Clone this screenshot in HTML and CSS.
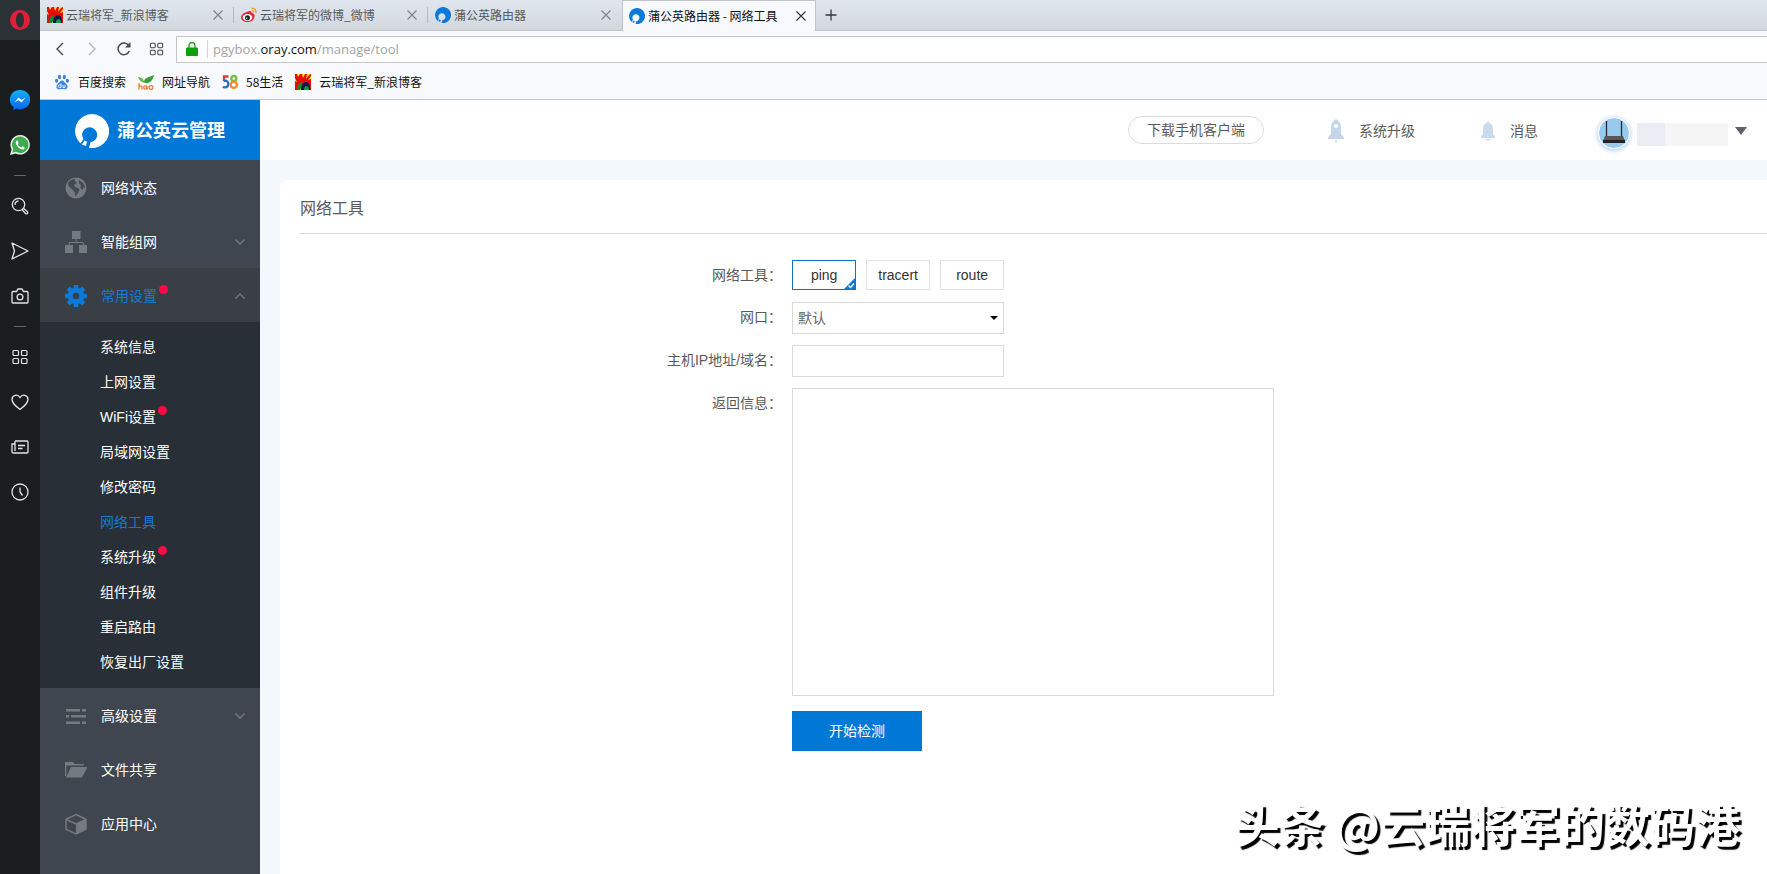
FILE: index.html
```html
<!DOCTYPE html>
<html lang="zh-CN">
<head>
<meta charset="utf-8">
<meta name="viewport" content="width=device-width, initial-scale=1">
<title>蒲公英路由器 - 网络工具</title>
<link rel="stylesheet" href="styles.css">
</head>
<body>
<svg class="defs" aria-hidden="true">
  <symbol id="i-close" viewBox="0 0 10 10"><path d="M.5.5l9 9M9.500.5l-9 9" fill="none" stroke="currentColor" stroke-width="1.1"/></symbol>
  <symbol id="i-pgy" viewBox="0 0 34 34"><path fill="currentColor" fill-rule="evenodd" d="M5.500 29.500A17 17 0 1 1 14 33.800l1.500-5.600A7.500 7.500 0 1 0 8.500 25z"/><path fill="currentColor" d="M7 30.500l2.500-4 2.500 1-1 4.500z"/></symbol>
  <symbol id="i-blog" viewBox="0 0 16 16"><path fill="#f8e71c" d="M0 0h16v16H0z"/><path fill="#e60c0c" d="M0 0h2l1 3 2-3h2l1 4 2-4h2l-1 5 3-4 2-1v2l-3 4 3-1v4l-4 2H4L0 9V7l2 1-2-4z"/><path fill="#d81010" d="M0 16V9l3-1 2 3-2 5zM16 16V8l-3 2v6z"/><path fill="#128a2c" d="M2 16l1-5 3-3 2 3-3 5z"/><path fill="#06164e" d="M6 16c0-5 2-8 5-8s4 4 4 8z"/><path fill="#179a33" d="M9 16c0-3 1-4 2.500-4S14 13 14 16z"/></symbol>
  <symbol id="i-four" viewBox="0 0 16 16"><g fill="none" stroke="currentColor" stroke-width="1.200"><rect x="1" y="1.500" width="5.500" height="5" rx="1"/><rect x="9.500" y="1.500" width="5.500" height="5" rx="1"/><rect x="1" y="9.500" width="5.500" height="5" rx="1"/><rect x="9.500" y="9.500" width="5.500" height="5" rx="1"/></g></symbol>
  <symbol id="i-down" viewBox="0 0 10 6"><path d="M.5.5L5 5 9.500.5" fill="none" stroke="currentColor" stroke-width="1.300"/></symbol>
  <symbol id="i-up" viewBox="0 0 10 6"><path d="M.5 5.500L5 1l4.500 4.500" fill="none" stroke="currentColor" stroke-width="1.300"/></symbol>
</svg>

<aside class="rail">
  <button class="rail-menu" aria-label="Opera"><svg width="20" height="20" viewBox="0 0 20 20"><path fill="#e3203a" fill-rule="evenodd" d="M10 0a10 10 0 1 0 0 20 10 10 0 0 0 0-20zm0 2.500c2.500 0 4 3.400 4 7.500s-1.500 7.500-4 7.500S6 14.100 6 10s1.500-7.500 4-7.500z"/><path fill="#8f1326" d="M12 1.500A10 10 0 0 1 12 18.500c3-1.500 4.500-4.500 4.500-8.500S15 3 12 1.500z"/></svg></button>
  <button aria-label="Messenger"><svg width="20" height="20" viewBox="0 0 20 20"><defs><linearGradient id="mg" x1="0" y1="0" x2="0" y2="1"><stop offset="0" stop-color="#12b0f5"/><stop offset="1" stop-color="#0a66f2"/></linearGradient></defs><path fill="url(#mg)" d="M10 0a10 9.600 0 0 0-6.500 17v3l3-1.500A10 9.600 0 1 0 10 0z"/><path d="M4.500 12.500l4-5 3 2.500 4-2.500-4 5-3-2.500z" fill="#fff"/></svg></button>
  <button aria-label="WhatsApp"><svg width="20" height="20" viewBox="0 0 20 20"><path fill="#e9f3e9" d="M10.200 0a9.800 9.800 0 0 0-8.600 14.500L0 20l5.500-1.500A9.800 9.800 0 1 0 10.200 0z"/><path fill="#3fab50" d="M10.200 1.600a8.200 8.200 0 0 0-7 12.500L2.300 17.700 6 16.800a8.200 8.200 0 1 0 4.200-15.200z"/><path fill="#fff" d="M7.300 5.200c-1.600.7-2 2.200-1 4.200 1.300 2.500 3.200 4.400 5.600 5 1.600.4 3-.8 2.800-2l-2.300-1.200-1.100 1.300c-1.700-.7-2.800-1.800-3.500-3.300l.9-1.200z"/></svg></button>
  <span class="rail-sep"></span>
  <button aria-label="搜索"><svg width="18" height="18" viewBox="0 0 18 18" fill="none" stroke="currentColor" stroke-width="1.300"><circle cx="7.500" cy="7.500" r="6.200"/><path d="M4 8a3.600 3.600 0 0 1 3.500-4"/><path d="M12 11l4.300 3.600a1.300 1.300 0 0 1-1.800 1.900L11 12.500" /></svg></button>
  <button aria-label="发送"><svg width="18" height="18" viewBox="0 0 18 18" fill="none" stroke="currentColor" stroke-width="1.300" stroke-linejoin="round"><path d="M1 1l16 8L1 17l2.500-8z"/></svg></button>
  <button aria-label="截图"><svg width="18" height="18" viewBox="0 0 18 18" fill="none" stroke="currentColor" stroke-width="1.300"><path d="M2 4.500h3.500L7 2h4l1.500 2.500H16a1 1 0 0 1 1 1V15a1 1 0 0 1-1 1H2a1 1 0 0 1-1-1V5.500a1 1 0 0 1 1-1z"/><circle cx="9" cy="10" r="2.900"/></svg></button>
  <span class="rail-sep"></span>
  <button aria-label="快速拨号"><svg width="18" height="16"><use href="#i-four"/></svg></button>
  <button aria-label="收藏"><svg width="18" height="18" viewBox="0 0 18 18" fill="none" stroke="currentColor" stroke-width="1.300"><path d="M9 16.500C4 12.500 1 10 1 6.500 1 2 6.500.5 9 4.500 11.500.5 17 2 17 6.500c0 3.500-3 6-8 10z"/></svg></button>
  <button aria-label="新闻"><svg width="18" height="18" viewBox="0 0 18 18" fill="none" stroke="currentColor" stroke-width="1.300"><path d="M4 3h12a1 1 0 0 1 1 1v10a1 1 0 0 1-1 1H2.500A1.500 1.500 0 0 1 1 13.500V6h2.500M4 3v10M7 7.500h7M7 10.500h4.500"/></svg></button>
  <button aria-label="历史"><svg width="18" height="18" viewBox="0 0 18 18" fill="none" stroke="currentColor" stroke-width="1.300"><circle cx="9" cy="9" r="8"/><path d="M9 4.500V9l2.500 3.500"/></svg></button>
</aside>

<div class="window">
  <div class="tabs">
    <div class="tab"><svg class="fav"><use href="#i-blog"/></svg><span>云瑞将军_新浪博客</span><button aria-label="关闭"><svg><use href="#i-close"/></svg></button></div>
    <div class="tab"><svg class="fav" viewBox="0 0 16 16"><path fill="#e0283a" d="M6 5c3-2 5-1 4.500 1C13 6 14 8 13.500 10c-.5 3-3.500 5-7 5S0 13 0 10.500 3 5.500 6 5z"/><ellipse cx="6.500" cy="10.500" rx="4.800" ry="3.400" fill="#fff"/><circle cx="6.500" cy="10.700" r="2.500" fill="#222"/><circle cx="5.700" cy="11.200" r=".8" fill="#fff"/><path fill="none" stroke="#f09a1f" stroke-width="1.300" d="M10.500 1.500c3-.7 5 1.500 4.300 4.500M10.700 3.800c1.500-.3 2.300.6 2 1.800"/></svg><span>云瑞将军的微博_微博</span><button aria-label="关闭"><svg><use href="#i-close"/></svg></button></div>
    <div class="tab"><svg class="fav blue"><use href="#i-pgy"/></svg><span>蒲公英路由器</span><button aria-label="关闭"><svg><use href="#i-close"/></svg></button></div>
    <div class="tab active"><svg class="fav blue"><use href="#i-pgy"/></svg><span>蒲公英路由器 - 网络工具</span><button aria-label="关闭"><svg><use href="#i-close"/></svg></button></div>
    <button class="new-tab" aria-label="新标签页"><svg width="12" height="12" viewBox="0 0 12 12"><path d="M6 .5v11M.5 6h11" stroke="currentColor" stroke-width="1.300"/></svg></button>
  </div>
  <div class="toolbar">
    <button aria-label="后退"><svg width="8" height="14" viewBox="0 0 8 14"><path d="M7 1L1 7l6 6" fill="none" stroke="currentColor" stroke-width="1.400"/></svg></button>
    <button class="dim" aria-label="前进"><svg width="8" height="14" viewBox="0 0 8 14"><path d="M1 1l6 6-6 6" fill="none" stroke="currentColor" stroke-width="1.400"/></svg></button>
    <button aria-label="刷新"><svg width="14" height="14" viewBox="0 0 14 14"><path d="M12.300 9A5.800 5.800 0 1 1 11.500 3.300" fill="none" stroke="currentColor" stroke-width="1.500"/><path d="M13.500 0v5.500H8z" fill="currentColor"/></svg></button>
    <button aria-label="快速拨号"><svg width="15" height="14"><use href="#i-four"/></svg></button>
    <div class="address">
      <svg width="12" height="14" viewBox="0 0 12 14"><path d="M3 6V3.500a3 3 0 0 1 6 0V6" fill="none" stroke="#0fa00f" stroke-width="1.300"/><rect y="5.500" width="12" height="8.500" rx="1" fill="#0fa00f"/></svg>
      <span class="url">pgybox.<b>oray.com</b>/manage/tool</span>
    </div>
  </div>
  <nav class="bookmarks">
    <a href="#"><svg viewBox="0 0 16 16"><g fill="#3c82e8"><ellipse cx="5.500" cy="3" rx="1.600" ry="2.300"/><ellipse cx="10.300" cy="3" rx="1.600" ry="2.300"/><ellipse cx="2.600" cy="6.800" rx="1.600" ry="2"/><ellipse cx="13.400" cy="6.800" rx="1.600" ry="2"/><path d="M8 6.500c2 0 2.500 2 4 3.300 3 2.600 1.300 6-1.500 5.500-1.800-.4-3.200-.4-5 0-2.800.5-4.500-2.900-1.500-5.500C5.500 8.500 6 6.500 8 6.500z"/></g><path d="M7 9.500v4H5.500a1.200 1.200 0 0 1 0-2.500H7M9 11v2.500h2V11" fill="none" stroke="#fff" stroke-width=".9"/></svg>百度搜索</a>
    <a href="#"><svg viewBox="0 0 16 16"><path fill="#3f9e3a" d="M6 8c0-4 5-5 10-7-1 5-4 9-9 8z"/><path fill="#69b84d" d="M0 3c3 0 6 2 6.500 6C3 8 1 6 0 3z"/><g fill="none" stroke="#ee7a34" stroke-width="1.300"><path d="M1 9v6.500M1 12.500c2-1.200 3-.5 3 1v2M9 12v3.500"/><circle cx="7.300" cy="13.500" r="1.600"/><circle cx="13" cy="13.500" r="1.900"/></g></svg>网址导航</a>
    <a href="#"><svg viewBox="0 0 16 16" fill="none" stroke-width="2.300"><path stroke="#e03a3a" d="M6.500 2.500H2V7"/><path stroke="#2b6fc0" d="M1.500 7C5 6 6.500 8 6.300 10.300S4 14 .7 13"/><circle cx="11.800" cy="4.500" r="2.500" stroke="#7cbb3a"/><circle cx="11.800" cy="10.800" r="3.100" stroke="#f08c28"/></svg>58生活</a>
    <a href="#"><svg><use href="#i-blog"/></svg>云瑞将军_新浪博客</a>
  </nav>

  <div class="app">
    <aside class="sidebar">
      <a class="brand" href="#"><svg><use href="#i-pgy"/></svg><span>蒲公英云管理</span></a>
      <a class="item" href="#"><svg class="ico" viewBox="0 0 22 22"><circle cx="11" cy="11" r="10.500" fill="#747a82"/><path fill="#434951" d="M3 6c2-3 4.500-4 7-4l-.5 2L12 5.500 9 8l1 2 3 1 1.500 2-1.500 3-2.500 3.500-1-4.500L7 12 3.500 9zM14 3l4 3 2.500 5-2-1-1 3-2-2 .5-3-2-1.500z"/></svg><span class="name">网络状态</span></a>
      <a class="item" href="#"><svg class="ico" viewBox="0 0 22 22" fill="#747a82"><path d="M7 0h8.500v8H7zM0 14h8v8H0zM14 14h8v8h-8zM10.700 8h1v3h7v3h-1v-2h-13v2h-1v-3h7z"/></svg><span class="name">智能组网</span><svg class="arrow"><use href="#i-down"/></svg></a>
      <a class="item open" href="#"><svg class="ico" viewBox="0 0 22 22"><g fill="#0d7ad9"><path id="cog" d="M8.700 0h4.600v22H8.700z"/><use href="#cog" transform="rotate(45 11 11)"/><use href="#cog" transform="rotate(90 11 11)"/><use href="#cog" transform="rotate(135 11 11)"/><circle cx="11" cy="11" r="8.300"/></g><circle cx="11" cy="11" r="3.300" fill="#393f44"/></svg><span class="name dot">常用设置</span><svg class="arrow"><use href="#i-up"/></svg></a>
      <nav class="sub">
        <a href="#"><span>系统信息</span></a>
        <a href="#"><span>上网设置</span></a>
        <a href="#"><span class="dot">WiFi设置</span></a>
        <a href="#"><span>局域网设置</span></a>
        <a href="#"><span>修改密码</span></a>
        <a href="#" class="current"><span>网络工具</span></a>
        <a href="#"><span class="dot">系统升级</span></a>
        <a href="#"><span>组件升级</span></a>
        <a href="#"><span>重启路由</span></a>
        <a href="#"><span>恢复出厂设置</span></a>
      </nav>
      <a class="item" href="#"><svg class="ico" viewBox="0 0 22 22" fill="#747a82"><path d="M1 4h14v2.500H1zM17 4h4v2.500h-4zM1 10h3v2.500H1zM6 10h15v2.500H6zM1 16.500h14V19H1zM17 16.500h4V19h-4z"/></svg><span class="name">高级设置</span><svg class="arrow"><use href="#i-down"/></svg></a>
      <a class="item" href="#"><svg class="ico" viewBox="0 0 22 22" fill="#747a82"><path d="M0 3h8l1.500 2H19v1.500H1.300V17H0zM6 8h16.500L17 18.500H1z"/></svg><span class="name">文件共享</span></a>
      <a class="item" href="#"><svg class="ico" viewBox="0 0 22 22"><path d="M11 1.500l10 4.800v10L11 21 1 16.300v-10zM1 6.300L11 11l10-4.700" fill="none" stroke="#747a82" stroke-width="1.400"/><path d="M11 11l10-4.700v10L11 21z" fill="#747a82"/></svg><span class="name">应用中心</span></a>
    </aside>

    <div class="page">
      <header class="topbar">
        <a class="pill" href="#">下载手机客户端</a>
        <a class="top-link" href="#"><svg width="16" height="24" viewBox="0 0 16 24"><path fill="#c6d6ea" d="M8 0c3 1.500 5 4.500 5 8v7l3 3.500V20H0v-1.500L3 15V8c0-3.500 2-6.500 5-8z"/><circle cx="8" cy="7" r="2" fill="#fff"/><path fill="#c6d6ea" d="M6.500 21.500h3L8 24z"/></svg>系统升级</a>
        <a class="top-link" href="#"><svg width="14" height="20" viewBox="0 0 14 20"><path fill="#c9daec" d="M7 0l1.500 2C11 3 12 5 12 8v5l2 2.500V17H0v-1.500L2 13V8c0-3 1-5 3.500-6zM4.500 18h5L7 20z"/></svg>消息</a>
        <button class="account" aria-label="账户">
          <svg class="avatar" viewBox="0 0 32 32"><circle cx="16" cy="16" r="15.500" fill="#98c9ef" stroke="#fff"/><path d="M8.500 4v16M23.500 4v16" stroke="#252a33" stroke-width="1.300"/><path fill="#5c5654" d="M7 19h18l2 5H5z"/><path fill="#20232b" d="M5 23h22v3H5z"/></svg>
          <span class="masked"></span>
          <svg class="caret" width="12" height="8" viewBox="0 0 12 8"><path d="M0 0h12L6 8z" fill="#5f6369"/></svg>
        </button>
      </header>
      <main class="card">
        <h1>网络工具</h1>
        <form class="form">
          <span class="label" id="tool-label">网络工具：</span>
          <div class="tools" role="radiogroup" aria-labelledby="tool-label">
            <label><input type="radio" name="tool" checked><span>ping</span><svg viewBox="0 0 11 11"><path d="M11 0v11H0z" fill="#0d7ad9"/><path d="M4.500 7.500l2 2L10 5.500" fill="none" stroke="#fff" stroke-width="1.200"/></svg></label>
            <label><input type="radio" name="tool"><span>tracert</span></label>
            <label><input type="radio" name="tool"><span>route</span></label>
          </div>
          <label class="label" for="port">网口：</label>
          <div class="select"><select id="port"><option>默认</option></select><svg viewBox="0 0 8 4"><path d="M0 0h8L4 4z"/></svg></div>
          <label class="label" for="host">主机IP地址/域名：</label>
          <input class="text" id="host" type="text">
          <label class="label" for="result">返回信息：</label>
          <textarea id="result"></textarea>
          <button class="submit" type="button">开始检测</button>
        </form>
      </main>
    </div>
  </div>
</div>
<div class="watermark">头条 @云瑞将军的数码港</div>
</body>
</html>
```
FILE: styles.css
```css
* { box-sizing: border-box; }
body {
  margin: 0;
  min-height: 100vh;
  display: flex;
  background: #f3f8fc;
  color: #5a5a5a;
  font: 14px/20px "Liberation Sans", "Noto Sans CJK SC", sans-serif;
}
a { color: inherit; text-decoration: none; }
button {
  padding: 0;
  border: 0;
  background: none;
  color: inherit;
  font: inherit;
}
svg { display: block; flex: none; }
.defs { position: absolute; width: 0; height: 0; }

/* Browser side rail */
.rail {
  width: 40px;
  flex: none;
  display: flex;
  flex-direction: column;
  background: #1b1e1f;
  color: #e4e6e6;
}
.rail button {
  height: 45px;
  display: grid;
  place-items: center;
  padding-right: 1px;
}
.rail .rail-menu { height: 40px; margin-bottom: 37px; background: #2b3236; }
.rail-sep { height: 16px; display: grid; place-items: center; }
.rail-sep::before { content: ""; width: 12px; height: 1px; background: #62676a; }

.window { flex: 1; min-width: 0; display: flex; flex-direction: column; }

/* Tabs */
.tabs {
  height: 31px;
  display: flex;
  background: linear-gradient(#e0e6ee, #d2d8de);
  border-bottom: 1px solid #c0c5c9;
  color: #55595c;
  font: 12px/18px "Noto Sans CJK SC", sans-serif;
}
.tab {
  width: 194px;
  display: flex;
  align-items: center;
  padding: 0 11px 0 7px;
  background: linear-gradient(#b5bac0, #b5bac0) right center / 1px 16px no-repeat;
}
.tab span { flex: 1; margin-left: 3px; white-space: nowrap; }
.tab button { color: #7d8287; }
.tab button svg { width: 10px; height: 10px; }
.tab:nth-child(3) { background: none; }
.tab.active {
  height: 31px;
  background: #f7f9fc;
  border: 1px solid #c0c5c9;
  border-bottom: 0;
  padding: 0 9px 0 6px;
  color: #111;
}
.tab.active button { color: #333; }
.fav { width: 16px; height: 16px; }
.blue { color: #0d7ad9; }
.new-tab { padding: 0 9px; color: #33373a; }

/* Address bar */
.toolbar {
  height: 36px;
  display: flex;
  align-items: center;
  padding-left: 4px;
  background: #f7f9fc;
  color: #44484b;
}
.toolbar button { width: 32px; display: grid; place-items: center; }
.toolbar .dim { color: #b5b8bb; }
.address {
  flex: 1;
  height: 27px;
  margin-left: 4px;
  display: flex;
  align-items: center;
  gap: 9px;
  padding-left: 9px;
  background: #fff;
  border: 1px solid #c4c6c8;
  border-right: 0;
}
.url {
  padding-left: 5px;
  border-left: 1px solid #d3d5d7;
  color: #a3a3a3;
  font: 13px/18px "Open Sans", sans-serif;
}
.url b { color: #111; font-weight: 400; }
.bookmarks {
  height: 33px;
  display: flex;
  align-items: center;
  gap: 12px;
  padding: 0 0 2px 14px;
  background: #f7f9fc;
  border-bottom: 1px solid #c4c6c8;
  color: #111;
  font: 12px/18px "Noto Sans CJK SC", sans-serif;
}
.bookmarks a { display: flex; align-items: center; gap: 8px; }
.bookmarks svg { width: 16px; height: 16px; }

/* Router console */
.app { flex: 1; display: flex; }
.sidebar { width: 220px; flex: none; background: #40464f; color: #fff; }
.brand {
  height: 60px;
  display: flex;
  align-items: center;
  gap: 8px;
  padding: 2px 0 0 35px;
  background: #0078d8;
  font-size: 18px;
  font-weight: 700;
}
.brand svg { width: 34px; height: 34px; }
.item { height: 54px; display: flex; align-items: center; padding: 2px 15px 0 25px; }
.item.open { background: #393f44; color: #1678d3; }
.ico { width: 22px; height: 22px; }
.name { margin: 0 auto 0 14px; }
.arrow { width: 10px; height: 6px; color: #747a82; }
.dot { position: relative; }
.dot::after {
  content: "";
  position: absolute;
  top: -1px;
  left: calc(100% + 2px);
  width: 9px;
  height: 9px;
  border-radius: 50%;
  background: #fb0b45;
}
.sub { padding: 7px 0 9px; background: #282f36; }
.sub a { height: 35px; display: flex; align-items: center; padding-left: 60px; }
.sub .current { color: #1678d3; }

.page { flex: 1; min-width: 0; display: flex; flex-direction: column; }
.topbar {
  height: 60px;
  display: flex;
  align-items: center;
  justify-content: flex-end;
  padding-right: 20px;
  background: #fff;
}
.pill {
  width: 136px;
  border: 1px solid #ddd;
  border-radius: 14px;
  line-height: 26px;
  text-align: center;
}
.top-link { display: flex; align-items: center; gap: 15px; margin-left: 64px; padding-top: 2px; }
.top-link + .top-link { margin-left: 66px; }
.account { display: flex; align-items: center; gap: 7px; margin-left: 60px; padding-top: 5px; }
.avatar { width: 32px; height: 32px; border-radius: 50%; box-shadow: 0 1px 4px 1px #bcd3f5; }
.masked {
  width: 91px;
  height: 23px;
  margin-top: 4px;
  background: linear-gradient(90deg, #eaedf3 28px, #f5f5f6 28px);
}
.caret { margin-bottom: 4px; }
.card {
  flex: 1;
  margin: 20px 0 0 20px;
  padding-left: 20px;
  background: #fff;
  border-top-left-radius: 8px;
}
h1 {
  margin: 0 0 26px;
  padding: 19px 0 14px;
  border-bottom: 1px solid #d9d9d9;
  font-size: 16px;
  line-height: 20px;
  font-weight: 400;
}
.form {
  display: grid;
  grid-template-columns: 33% 1fr;
  gap: 11px 8px;
  justify-items: start;
}
.label { justify-self: end; padding-right: 2px; line-height: 31px; }
.tools { display: flex; gap: 10px; color: #333; }
.tools label {
  position: relative;
  width: 64px;
  height: 30px;
  border: 1px solid #e2e2e2;
  line-height: 28px;
  text-align: center;
}
.tools label:has(:checked) { border-color: #1173bd; }
.tools input { position: absolute; opacity: 0; margin: 0; }
.tools svg { position: absolute; right: 0; bottom: 0; width: 11px; height: 11px; }
.select { position: relative; width: 212px; }
.select svg { position: absolute; right: 6px; top: 14px; width: 8px; height: 4px; }
select, .text, textarea {
  display: block;
  width: 212px;
  height: 32px;
  padding: 0 5px;
  border: 1px solid #d9dadb;
  border-radius: 0;
  background: #fff;
  color: #666;
  font: inherit;
  appearance: none;
  outline: 0;
}
textarea { width: 482px; height: 308px; max-width: 100%; resize: none; }
.submit {
  grid-column: 2;
  width: 130px;
  height: 40px;
  margin-top: 4px;
  background: #0078d8;
  color: #fff;
}
.watermark {
  position: fixed;
  right: 27px;
  bottom: 20px;
  color: #fff;
  font: 700 45px/60px "Noto Sans CJK SC", sans-serif;
  text-shadow: 3px 3px 1px #000;
  white-space: nowrap;
}
```
